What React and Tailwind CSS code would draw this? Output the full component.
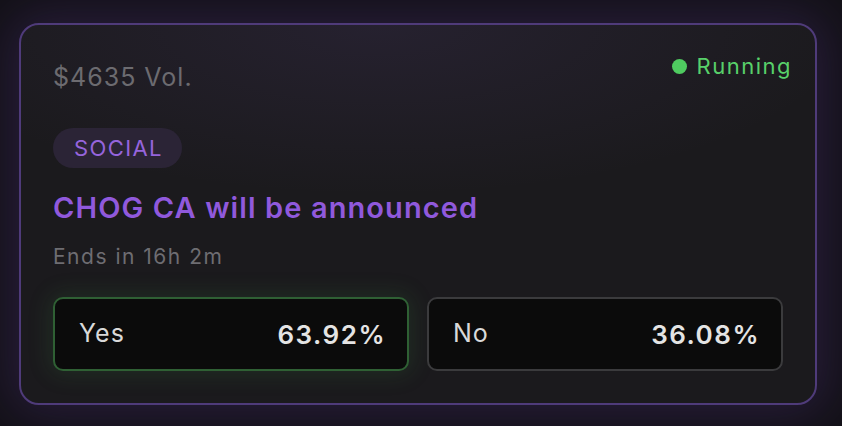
import React from "react";

export default function App() {
  return (
    <div
      className="w-[842px] h-[426px] bg-[#131117] pt-[23px] pl-[19px] overflow-hidden"
      style={{ fontFamily: "Inter, 'Noto Sans', sans-serif" }}
    >
      <div className="relative w-[798px] h-[382px] rounded-[20px] border-2 border-[#4f3b7a] bg-[#1b1a1d] shadow-[0_0_48px_10px_rgba(95,60,155,0.26)] overflow-hidden">
        <div className="absolute inset-0 bg-[radial-gradient(ellipse_60%_45%_at_45%_0%,rgba(110,80,170,0.13),transparent)]" />
        <div className="relative px-[32px] flex flex-col">
          <div className="flex justify-between items-start">
            <div className="mt-[36px] text-[25px] leading-[32px] tracking-[1px] text-[#6c6b70]">$4635 Vol.</div>
            <div className="mt-[27px] flex items-center gap-[10px] -mr-[9px]">
              <span className="w-[15px] h-[15px] rounded-full bg-[#4fcb60]" />
              <span className="text-[22px] leading-[28px] tracking-[1.5px] text-[#58d06a]">Running</span>
            </div>
          </div>
          <div className="mt-[35px] self-start h-[40px] pl-[21px] pr-[19px] rounded-full bg-[#2b2436] flex items-center text-[22px] tracking-[1.4px] text-[#9664dc]">
            SOCIAL
          </div>
          <div className="mt-[22px] text-[29px] leading-[36px] font-semibold tracking-[1.1px] text-[#9059dc]">
            CHOG CA will be announced
          </div>
          <div className="mt-[17px] text-[21px] leading-[28px] tracking-[1.5px] text-[#6e6d72]">Ends in 16h 2m</div>
          <div className="mt-[26px] flex gap-[18px]">
            <div className="flex-1 h-[74px] rounded-[10px] border-2 border-[#2f6034] bg-[#0b0b0b] shadow-[0_0_22px_4px_rgba(60,140,70,0.16)] flex items-center justify-between pl-[24px] pr-[21px]">
              <span className="text-[25px] tracking-[1px] text-[#d9d9d9]">Yes</span>
              <span className="text-[26px] font-semibold tracking-[1.5px] text-[#e4e4e4]">63.92%</span>
            </div>
            <div className="flex-1 h-[74px] rounded-[10px] border-2 border-[#3b3b3d] bg-[#0b0b0b] flex items-center justify-between pl-[24px] pr-[21px]">
              <span className="text-[25px] tracking-[1px] text-[#d9d9d9]">No</span>
              <span className="text-[26px] font-semibold tracking-[1.5px] text-[#e4e4e4]">36.08%</span>
            </div>
          </div>
        </div>
      </div>
    </div>
  );
}
